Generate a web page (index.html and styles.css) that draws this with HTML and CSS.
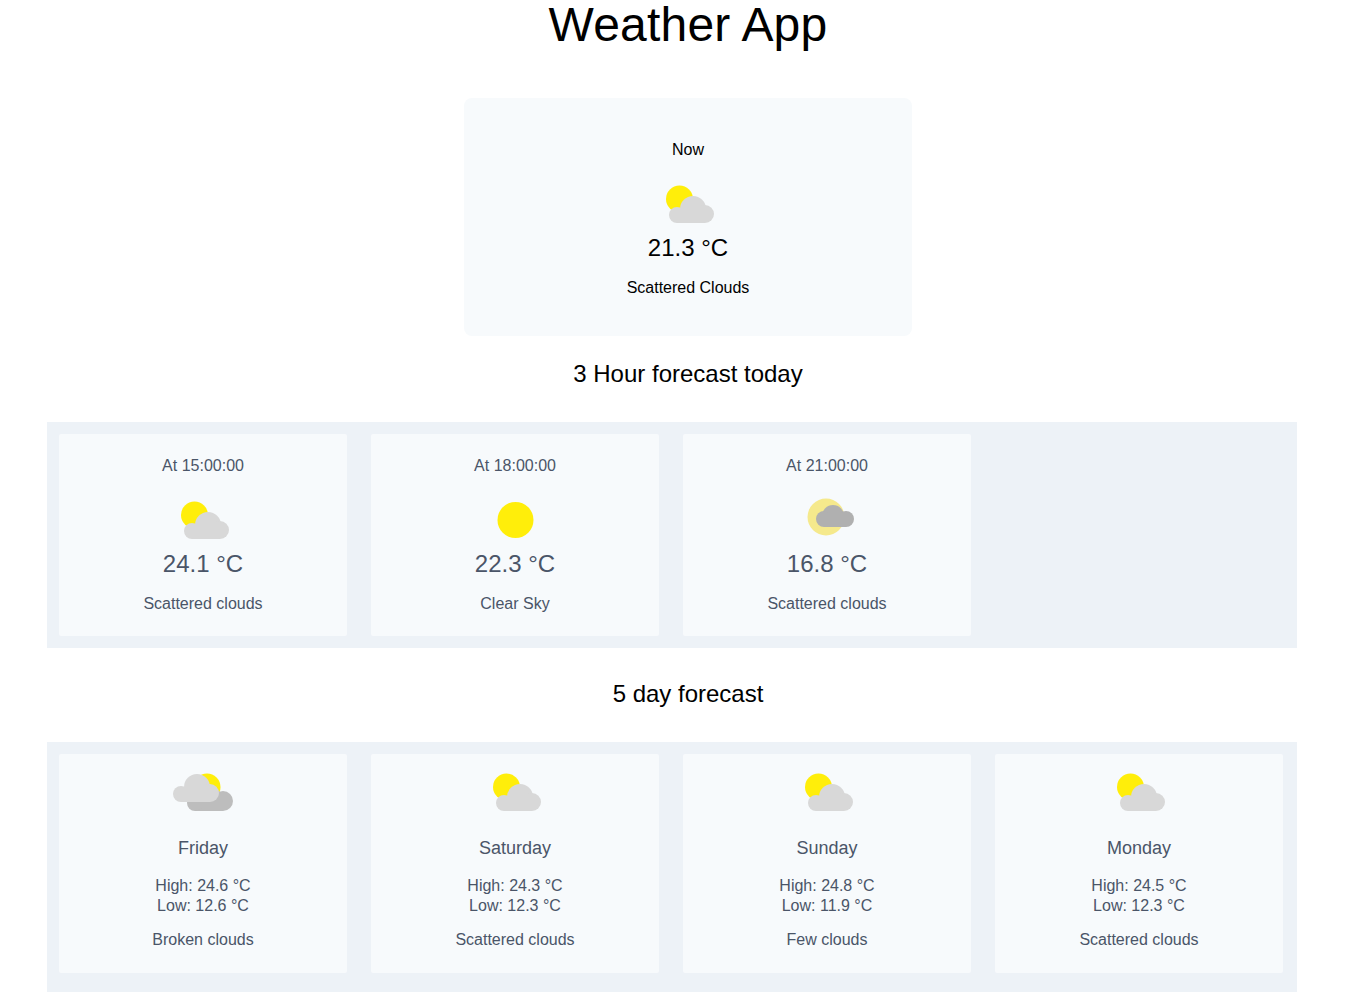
FILE: index.html

```html
<!DOCTYPE html>
<html lang="en">
<head>
  <meta charset="UTF-8" />
  <title>Weather App</title>
  <link rel="stylesheet" href="styles.css">
</head>
<body>
  <svg class="defs" width="0" height="0">
    <defs>
      <g id="cloudLight">
        <circle cx="35" cy="27" r="13" />
        <circle cx="19" cy="33" r="8" />
        <circle cx="47" cy="32" r="9" />
        <rect x="19" y="30" width="28" height="11" />
      </g>
      <g id="scattered">
        <circle cx="21.5" cy="17" r="13.5" fill="#ffee0a" />
        <use href="#cloudLight" fill="#d8d8d8" />
      </g>
    </defs>
  </svg>

  <div class="app">
    <h1>Weather App</h1>

    <div class="now-card">
      <div class="label">Now</div>
      <svg class="icon" viewBox="0 0 60 47"><use href="#scattered" /></svg>
      <div class="temp">21.3 °C</div>
      <div class="desc">Scattered Clouds</div>
    </div>

    <h2>3 Hour forecast today</h2>
    <div class="panel">
      <div class="card hour-card">
        <div class="label">At 15:00:00</div>
        <svg class="icon" viewBox="0 0 60 47"><use href="#scattered" /></svg>
        <div class="temp">24.1 °C</div>
        <div class="desc">Scattered clouds</div>
      </div>
      <div class="card hour-card">
        <div class="label">At 18:00:00</div>
        <svg class="icon" viewBox="0 0 60 47"><circle cx="30.5" cy="22" r="18" fill="#ffee0a" /></svg>
        <div class="temp">22.3 °C</div>
        <div class="desc">Clear Sky</div>
      </div>
      <div class="card hour-card">
        <div class="label">At 21:00:00</div>
        <svg class="icon" viewBox="0 0 60 47">
          <circle cx="29" cy="19" r="18.5" fill="#f5e98c" />
          <g fill="#b0b0b0">
            <circle cx="36" cy="18" r="11" />
            <circle cx="27" cy="21" r="8" />
            <circle cx="49" cy="21" r="8" />
            <rect x="27" y="19" width="22" height="10" />
          </g>
        </svg>
        <div class="temp">16.8 °C</div>
        <div class="desc">Scattered clouds</div>
      </div>
    </div>

    <h2 class="second">5 day forecast</h2>
    <div class="panel last">
      <div class="card day-card">
        <svg class="icon" viewBox="0 0 60 47">
          <circle cx="34" cy="17" r="13.5" fill="#ffee0a" />
          <g fill="#bdbdbd">
            <circle cx="40" cy="29" r="10" />
            <circle cx="50" cy="31" r="10" />
            <rect x="22" y="30" width="28" height="11" />
            <circle cx="22" cy="33" r="8" />
          </g>
          <g fill="#d8d8d8">
            <circle cx="24" cy="17" r="13" />
            <circle cx="8" cy="24" r="8" />
            <circle cx="37" cy="23" r="9" />
            <rect x="8" y="20" width="29" height="12" />
          </g>
        </svg>
        <div class="day">Friday</div>
        <div class="range">High: 24.6 °C<br>Low: 12.6 °C</div>
        <div class="desc">Broken clouds</div>
      </div>
      <div class="card day-card">
        <svg class="icon" viewBox="0 0 60 47"><use href="#scattered" /></svg>
        <div class="day">Saturday</div>
        <div class="range">High: 24.3 °C<br>Low: 12.3 °C</div>
        <div class="desc">Scattered clouds</div>
      </div>
      <div class="card day-card">
        <svg class="icon" viewBox="0 0 60 47"><use href="#scattered" /></svg>
        <div class="day">Sunday</div>
        <div class="range">High: 24.8 °C<br>Low: 11.9 °C</div>
        <div class="desc">Few clouds</div>
      </div>
      <div class="card day-card">
        <svg class="icon" viewBox="0 0 60 47"><use href="#scattered" /></svg>
        <div class="day">Monday</div>
        <div class="range">High: 24.5 °C<br>Low: 12.3 °C</div>
        <div class="desc">Scattered clouds</div>
      </div>
    </div>
  </div>
</body>
</html>
```

FILE: styles.css

```css
html, body {
  overflow-x: hidden;
}
body {
  margin: 0;
  font-family: "Liberation Sans", Arial, sans-serif;
  font-size: 16px;
  line-height: 24px;
  color: #000;
  background: #fff;
  text-align: center;
}
.defs {
  position: absolute;
}
.app {
  width: 1376px;
}
h1 {
  margin: 0 0 48px;
  font-size: 48px;
  font-weight: normal;
  line-height: 50px;
  letter-spacing: 0.2px;
}
h2 {
  margin: 20px 0 30px;
  font-size: 24px;
  font-weight: normal;
  line-height: 36px;
}
h2.second {
  margin-top: 28px;
}
.now-card {
  width: 448px;
  box-sizing: border-box;
  margin: 0 auto;
  padding: 40px 0 36px;
  background: #f7fafc;
  border-radius: 8px;
}
.panel {
  display: flex;
  gap: 24px;
  width: 1250px;
  box-sizing: border-box;
  margin-left: 47px;
  padding: 12px 14px 12px 12px;
  background: #edf2f7;
}
.panel.last {
  padding-bottom: 19px;
}
.card {
  width: 288px;
  box-sizing: border-box;
  background: #f7fafc;
  border-radius: 2px;
  color: #4a5568;
}
.hour-card {
  padding: 20px 0 20px;
}
.day-card {
  padding: 16px 0 21px;
}
.icon {
  display: block;
  width: 60px;
  height: 47px;
  margin: 0 auto;
}
.label {
  margin-bottom: 20px;
}
.temp {
  padding-top: 1px;
  margin-bottom: 10px;
  font-size: 24px;
  line-height: 36px;
}
.day {
  margin-top: 19px;
  font-size: 18px;
}
.range {
  margin: 16px 0 12px;
  line-height: 20px;
}
```
